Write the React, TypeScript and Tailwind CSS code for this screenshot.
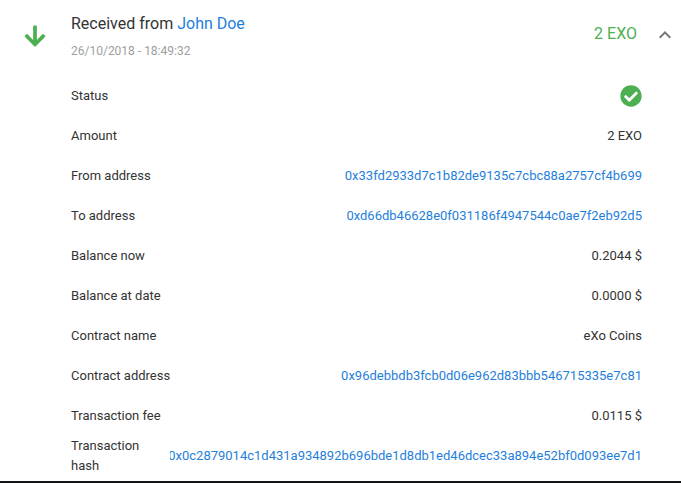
import React from "react";

type Row = { label: string; value: React.ReactNode; link?: boolean };

const rows: Row[] = [
  { label: "Amount", value: "2 EXO" },
  { label: "From address", value: "0x33fd2933d7c1b82de9135c7cbc88a2757cf4b699", link: true },
  { label: "To address", value: "0xd66db46628e0f031186f4947544c0ae7f2eb92d5", link: true },
  { label: "Balance now", value: "0.2044 $" },
  { label: "Balance at date", value: "0.0000 $" },
  { label: "Contract name", value: "eXo Coins" },
  { label: "Contract address", value: "0x96debbdb3fcb0d06e962d83bbb546715335e7c81", link: true },
  { label: "Transaction fee", value: "0.0115 $" },
  { label: "Transaction hash", value: "0x0c2879014c1d431a934892b696bde1d8db1ed46dcec33a894e52bf0d093ee7d1", link: true },
];

export default function App() {
  return (
    <div className="flex h-[483px] w-[681px] flex-col overflow-hidden border-b-2 border-[#131417] bg-white font-['Roboto',sans-serif] text-[#333]">
      <header className="flex h-[76px] shrink-0">
        <div className="flex w-[71px] shrink-0 pl-[23px] pt-[24px]">
          <svg width="24" height="24" viewBox="0 0 448 512" fill="#4caf50">
            <path d="M413.1 222.5l22.2 22.2c9.4 9.4 9.4 24.6 0 33.9L241 473c-9.4 9.4-24.6 9.4-33.9 0L12.7 278.6c-9.4-9.4-9.4-24.6 0-33.9l22.2-22.2c9.5-9.5 25-9.3 34.3.4L184 343.4V56c0-13.3 10.7-24 24-24h32c13.3 0 24 10.7 24 24v287.4l114.8-120.5c9.3-9.8 24.8-10 34.3-.4z" />
          </svg>
        </div>
        <div className="flex-1 pt-[12px]">
          <div className="text-base leading-6">
            Received from <a className="text-[#1f80db]">John Doe</a>
          </div>
          <div className="pt-[5px] text-[12px] leading-5 text-[#9e9e9e]">26/10/2018 - 18:49:32</div>
        </div>
        <div className="pt-[22px] text-base leading-6 text-[#4caf50]">2 EXO</div>
        <svg className="ml-[16px] mr-[4px] mt-[23px]" width="24" height="24" viewBox="0 0 24 24" fill="#757575">
          <path d="M7.41 15.41 12 10.83l4.59 4.58L18 14l-6-6-6 6z" />
        </svg>
      </header>
      <main className="pl-[71px] pr-[39px] text-[13px] leading-5">
        <div className="flex h-10 items-center justify-between">
          <span>Status</span>
          <svg width="22" height="22" viewBox="0 0 512 512" fill="#4caf50">
            <path d="M504 256c0 136.967-111.033 248-248 248S8 392.967 8 256 119.033 8 256 8s248 111.033 248 248zM227.314 387.314l184-184c6.248-6.248 6.248-16.379 0-22.627l-22.627-22.627c-6.248-6.249-16.379-6.249-22.628 0L216 308.118l-70.059-70.059c-6.248-6.248-16.379-6.248-22.628 0l-22.627 22.627c-6.248 6.248-6.248 16.379 0 22.627l104 104c6.249 6.249 16.379 6.249 22.628.001z" />
          </svg>
        </div>
        {rows.map((r) => (
          <div key={r.label} className="flex h-10 items-center justify-between">
            <span className="max-w-[105px]">{r.label}</span>
            <span
              className={
                r.link
                  ? "flex max-w-[472px] justify-end overflow-hidden whitespace-nowrap text-[#1f80db]"
                  : "whitespace-nowrap"
              }
            >
              {r.value}
            </span>
          </div>
        ))}
      </main>
    </div>
  );
}
